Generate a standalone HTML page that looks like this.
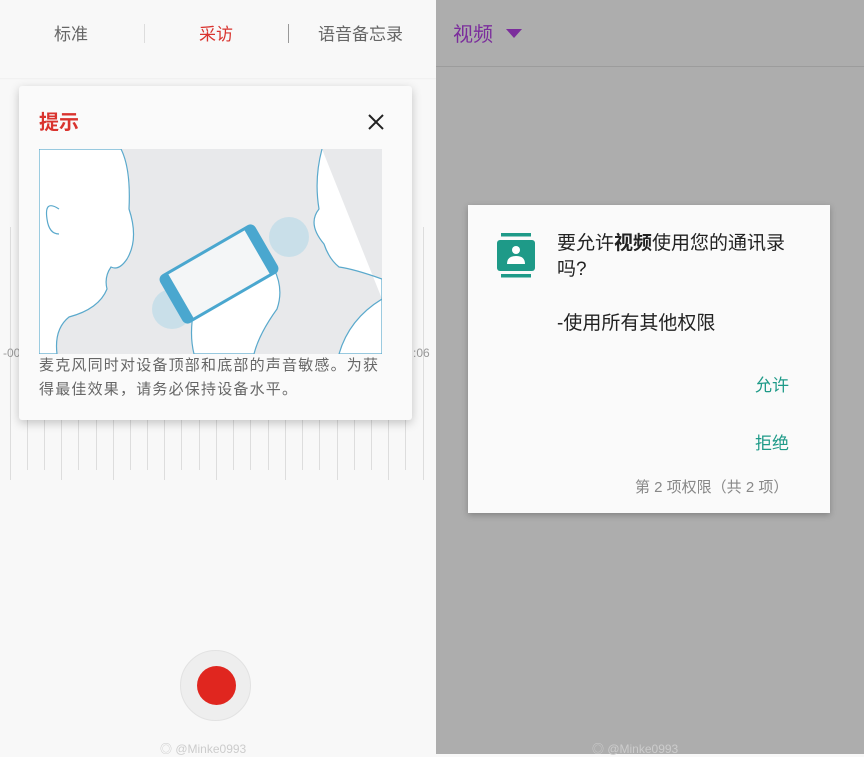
<!DOCTYPE html>
<html><head><meta charset="utf-8"><style>
*{margin:0;padding:0;box-sizing:border-box}
body{width:864px;height:754px;overflow:hidden;position:relative;font-family:"Liberation Sans","Noto Sans CJK SC",sans-serif;background:#f8f8f8}
.a{position:absolute;white-space:nowrap}
</style></head><body>
<!-- left -->
<div class="a" style="left:54px;top:20px;font-size:17px;color:#666">标准</div>
<div class="a" style="left:144px;top:24px;width:1px;height:19px;background:#ddd"></div>
<div class="a" style="left:199px;top:20px;font-size:17px;color:#d9332e">采访</div>
<div class="a" style="left:288px;top:24px;width:1px;height:19px;background:#999"></div>
<div class="a" style="left:318px;top:20px;font-size:17px;color:#666">语音备忘录</div>
<div class="a" style="left:0;top:78px;width:436px;height:2px;background:linear-gradient(#eee,#f8f8f8)"></div>
<svg class="a" style="left:0;top:0" width="436" height="500">
<g stroke="#ddd" stroke-width="1">
<line x1="10.5" y1="227" x2="10.5" y2="480"/><line x1="423.5" y1="227" x2="423.5" y2="480"/>
<line x1="27.5" y1="420" x2="27.5" y2="470"/><line x1="44.5" y1="420" x2="44.5" y2="470"/><line x1="61.5" y1="420" x2="61.5" y2="480"/>
<line x1="78.5" y1="420" x2="78.5" y2="470"/><line x1="96.5" y1="420" x2="96.5" y2="470"/><line x1="113.5" y1="420" x2="113.5" y2="480"/>
<line x1="130.5" y1="420" x2="130.5" y2="470"/><line x1="147.5" y1="420" x2="147.5" y2="470"/><line x1="164.5" y1="420" x2="164.5" y2="480"/>
<line x1="181.5" y1="420" x2="181.5" y2="470"/><line x1="199.5" y1="420" x2="199.5" y2="470"/><line x1="216.5" y1="420" x2="216.5" y2="480"/>
<line x1="233.5" y1="420" x2="233.5" y2="470"/><line x1="250.5" y1="420" x2="250.5" y2="470"/><line x1="268.5" y1="420" x2="268.5" y2="470"/>
<line x1="285.5" y1="420" x2="285.5" y2="480"/><line x1="302.5" y1="420" x2="302.5" y2="470"/><line x1="319.5" y1="420" x2="319.5" y2="470"/>
<line x1="337.5" y1="420" x2="337.5" y2="480"/><line x1="354.5" y1="420" x2="354.5" y2="470"/><line x1="371.5" y1="420" x2="371.5" y2="470"/><line x1="388.5" y1="420" x2="388.5" y2="480"/><line x1="405.5" y1="420" x2="405.5" y2="470"/>
</g></svg>
<div class="a" style="left:3px;top:346px;font-size:12px;color:#999">-00</div>
<div class="a" style="left:413px;top:346px;font-size:12px;color:#999">:06</div>
<div class="a" style="left:19px;top:86px;width:393px;height:334px;background:#fafafa;border-radius:3px;box-shadow:0 3px 10px rgba(0,0,0,.22)"></div>
<div class="a" style="left:39px;top:106px;font-size:20px;font-weight:bold;color:#d9332e">提示</div>
<svg class="a" style="left:367px;top:113px" width="18" height="18"><path d="M2 2L16 16M16 2L2 16" stroke="#222" stroke-width="2"/></svg>
<svg class="a" style="left:39px;top:149px" width="343" height="205">
<rect width="343" height="205" fill="#e8e9eb"/>
<path d="M0 0H82Q92 20 90 60Q100 90 88 110Q80 122 72 118Q65 128 68 140Q60 160 30 168Q15 180 18 205H0Z" fill="#fff" stroke="#5aa9cc" stroke-width="1.2"/>
<path d="M20 60Q5 50 8 70Q10 85 20 85" fill="none" stroke="#5aa9cc" stroke-width="1.2"/>
<path d="M283 0Q275 30 280 60Q268 75 285 95Q290 110 300 118Q315 120 343 130V205H300Q310 170 343 150" fill="#fff" stroke="#5aa9cc" stroke-width="1.2"/>
<circle cx="250" cy="88" r="20" fill="#c9dfe9"/><circle cx="133" cy="160" r="20" fill="#c9dfe9"/>
<path d="M155 160Q170 150 180 140L235 120Q245 140 238 160Q220 185 215 205H155Q150 185 155 160Z" fill="#fff" stroke="#5aa9cc" stroke-width="1.2"/>
<g transform="rotate(-30 180 125)"><rect x="125" y="97" width="110" height="56" rx="6" fill="#4aa7cf"/><rect x="136" y="100" width="88" height="50" fill="#f4f6f7"/></g>
</svg>
<div class="a" style="left:39px;top:354px;font-size:15px;letter-spacing:1.2px;line-height:24px;color:#666">麦克风同时对设备顶部和底部的声音敏感。为获<br>得最佳效果，请务必保持设备水平。</div>
<div class="a" style="left:180px;top:650px;width:71px;height:71px;border-radius:50%;background:#eee;border:1px solid #e2e2e2"></div>
<div class="a" style="left:197px;top:666px;width:39px;height:39px;border-radius:50%;background:#e0261f"></div>
<div class="a" style="left:160px;top:740px;font-size:12px;color:#ccc">◎ @Minke0993</div>
<!-- right -->
<div class="a" style="left:436px;top:0;width:428px;height:754px;background:#adadad"></div>
<div class="a" style="left:436px;top:66px;width:428px;height:1px;background:#9c9c9c"></div>
<div class="a" style="left:453px;top:18px;font-size:20px;color:#7b2d9c">视频</div>
<svg class="a" style="left:506px;top:29px" width="16" height="10"><path d="M0 0H16L8 9Z" fill="#7b2d9c"/></svg>
<div class="a" style="left:468px;top:205px;width:362px;height:308px;background:#fafafa;box-shadow:0 2px 6px rgba(0,0,0,.25)"></div>
<svg class="a" style="left:497px;top:233px" width="38" height="45">
<rect x="4" y="0" width="30" height="3.5" fill="#1e9a88"/><rect x="4" y="41" width="30" height="3.5" fill="#1e9a88"/>
<rect x="0" y="7" width="38" height="31" rx="3" fill="#1e9a88"/>
<circle cx="19" cy="17" r="4" fill="#fff"/><path d="M10 31Q10 23 19 23Q28 23 28 31Z" fill="#fff"/></svg>
<div class="a" style="left:557px;top:231px;font-size:19px;line-height:26px;color:#222">要允许<b>视频</b>使用您的通讯录<br>吗?</div>
<div class="a" style="left:557px;top:308px;font-size:19px;color:#222">-使用所有其他权限</div>
<div class="a" style="left:755px;top:371px;font-size:17px;color:#1e9a88">允许</div>
<div class="a" style="left:755px;top:429px;font-size:17px;color:#1e9a88">拒绝</div>
<div class="a" style="left:635px;top:476px;font-size:15px;color:#888">第 2 项权限（共 2 项）</div>
<div class="a" style="left:592px;top:740px;font-size:12px;color:#ccc">◎ @Minke0993</div>
</body></html>
